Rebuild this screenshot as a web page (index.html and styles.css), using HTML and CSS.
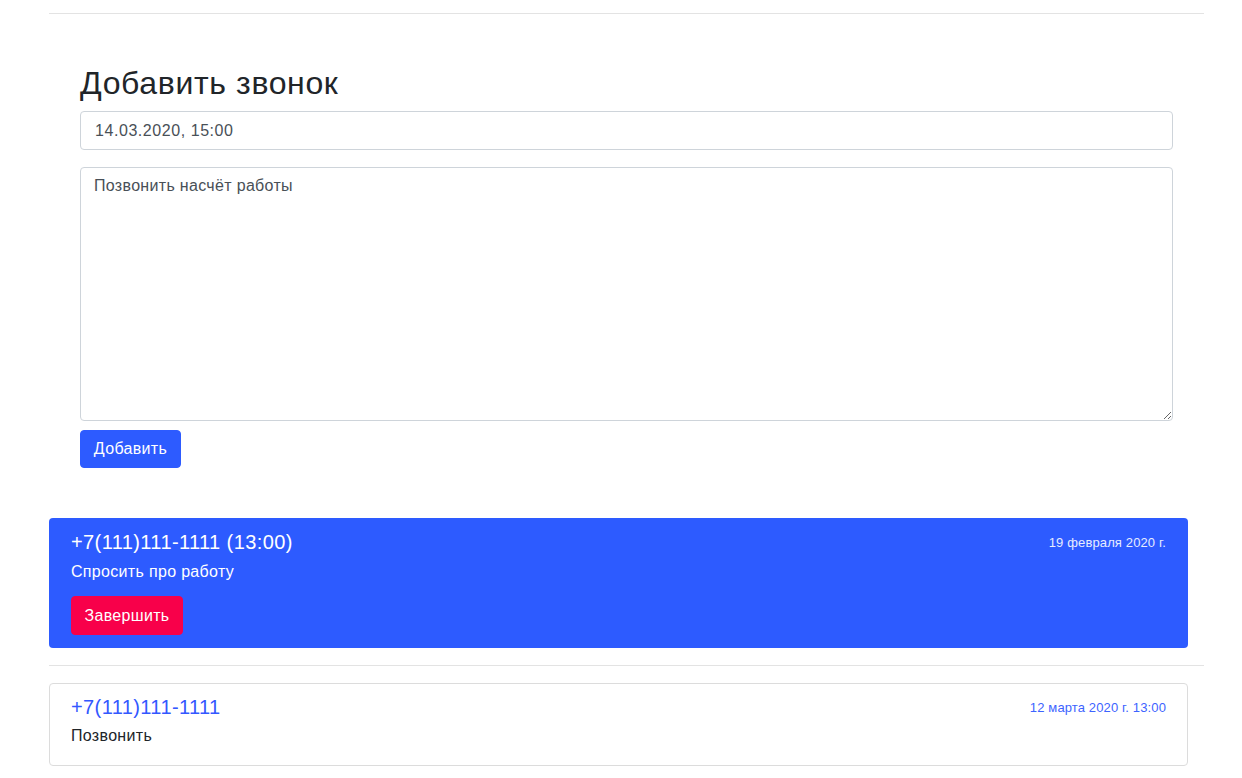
FILE: index.html
```html
<!DOCTYPE html>
<html lang="ru">
<head>
<meta charset="utf-8">
<title>Звонки</title>
<link rel="stylesheet" href="styles.css">
</head>
<body>
<div class="wrap">
  <hr class="rule rule-top">
  <form class="add-form">
    <h1 class="title">Добавить звонок</h1>
    <input class="field" type="text" value="14.03.2020, 15:00">
    <textarea class="field area">Позвонить насчёт работы</textarea>
    <button class="btn btn-primary" type="button">Добавить</button>
  </form>
  <div class="card card-active">
    <div class="card-head">
      <span class="phone">+7(111)111-1111 (13:00)</span>
      <span class="date">19 февраля 2020 г.</span>
    </div>
    <div class="desc">Спросить про работу</div>
    <button class="btn btn-danger" type="button">Завершить</button>
  </div>
  <hr class="rule rule-mid">
  <div class="card card-plain">
    <div class="card-head">
      <span class="phone">+7(111)111-1111</span>
      <span class="date">12 марта 2020 г. 13:00</span>
    </div>
    <div class="desc">Позвонить</div>
  </div>
</div>
</body>
</html>
```

FILE: styles.css
```css
html, body {
  margin: 0;
  padding: 0;
  background: #fff;
}
body {
  font-family: "Liberation Sans", Arial, sans-serif;
  font-size: 16px;
  line-height: 1.5;
  color: #212529;
}
.wrap {
  width: 1155px;
  margin-left: 49px;
  padding-top: 13px;
}
.rule {
  border: 0;
  border-top: 1px solid #e3e3e3;
  margin: 0;
  height: 0;
}
.add-form {
  padding: 50px 31px 0;
  display: flex;
  flex-direction: column;
  align-items: flex-start;
}
.title {
  font-size: 32px;
  font-weight: 400;
  line-height: 1.2;
  letter-spacing: 0.02em;
  margin: 0 0 9px;
  color: #212529;
}
.field {
  box-sizing: border-box;
  width: 100%;
  font-family: "Liberation Sans", Arial, sans-serif;
  font-size: 16px;
  line-height: 24px;
  letter-spacing: 0.02em;
  color: #495057;
  border: 1px solid #ced4da;
  border-radius: 4px;
  padding: 6px 13px;
  margin: 0;
  background: #fff;
  outline: none;
}
input.field {
  height: 39px;
  padding-left: 14px;
  letter-spacing: 0.035em;
}
.area {
  display: block;
  margin-top: 17px;
  height: 254px;
  resize: vertical;
}
.btn {
  font-family: "Liberation Sans", Arial, sans-serif;
  font-size: 16px;
  line-height: 24px;
  letter-spacing: 0.02em;
  border: 1px solid transparent;
  border-radius: 4px;
  padding: 6px 12px;
  color: #fff;
  cursor: pointer;
}
.btn-primary {
  margin-top: 9px;
  background: #2d5bff;
  border-color: #2d5bff;
  width: 101px;
  height: 38px;
}
.btn-danger {
  background: #f8004a;
  border-color: #f8004a;
  width: 112px;
  height: 39px;
  margin-top: 12px;
}
.card {
  box-sizing: border-box;
  width: 1139px;
  border-radius: 4px;
}
.card-active {
  margin-top: 50px;
  background: #2d5bff;
  color: #fff;
  padding: 12px 22px 13px;
}
.card-head {
  display: flex;
  justify-content: space-between;
  align-items: center;
}
.phone {
  font-size: 20px;
  line-height: 24px;
  letter-spacing: 0.02em;
}
.date {
  font-size: 13px;
  line-height: 19.5px;
  letter-spacing: 0.01em;
}
.desc {
  letter-spacing: 0.02em;
}
.card-active .date {
  color: #e6ecff;
}
.card-active .desc {
  margin-top: 6px;
}
.rule-mid {
  margin: 17px 0 17px;
}
.card-plain {
  border: 1px solid #dcdcdc;
  padding: 11px 21px 17px;
}
.card-plain .phone {
  color: #3358ff;
}
.card-plain .date {
  color: #3d63ff;
}
.card-plain .desc {
  margin-top: 5px;
  color: #212529;
}
```
